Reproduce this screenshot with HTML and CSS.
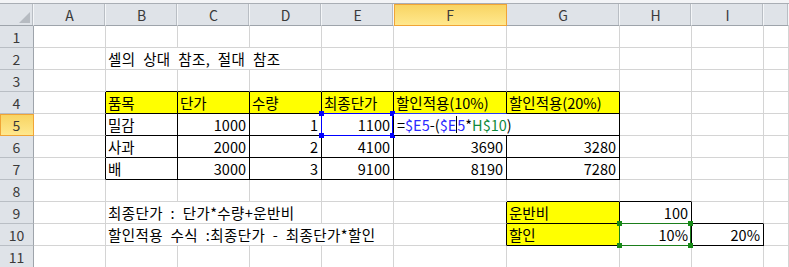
FILE: index.html
```html
<!DOCTYPE html>
<html>
<head>
    <meta charset="UTF-8">
    <title>셀의 상대 참조, 절대 참조</title>
    <link rel="stylesheet" href="styles.css">
</head>
<body>
    <div class="top-strip"></div>
    <div class="sheet">
        <!-- column headers -->
        <div class="ch corner"><span class="tri"></span></div>
        <div class="ch">A</div>
        <div class="ch">B</div>
        <div class="ch">C</div>
        <div class="ch">D</div>
        <div class="ch">E</div>
        <div class="ch sel">F</div>
        <div class="ch">G</div>
        <div class="ch">H</div>
        <div class="ch">I</div>
        <div class="ch"></div>

        <!-- row 1 -->
        <div class="rh">1</div>
        <div class="c"></div><div class="c"></div><div class="c"></div><div class="c"></div><div class="c"></div>
        <div class="c"></div><div class="c"></div><div class="c"></div><div class="c"></div><div class="c"></div>

        <!-- row 2 -->
        <div class="rh">2</div>
        <div class="c"></div>
        <div class="c span3 ko"><span>셀의 상대 참조, 절대 참조</span></div>
        <div class="c"></div><div class="c"></div><div class="c"></div><div class="c"></div><div class="c"></div><div class="c"></div>

        <!-- row 3 -->
        <div class="rh">3</div>
        <div class="c"></div>
        <div class="c bb"></div><div class="c bb"></div><div class="c bb"></div><div class="c bb"></div><div class="c bb"></div><div class="c bb"></div>
        <div class="c"></div><div class="c"></div><div class="c"></div>

        <!-- row 4 -->
        <div class="rh">4</div>
        <div class="c br"></div>
        <div class="c bk yel">품목</div>
        <div class="c bk yel">단가</div>
        <div class="c bk yel">수량</div>
        <div class="c bk yel">최종단가</div>
        <div class="c bk yel blue-under">할인적용(10%)</div>
        <div class="c bk yel">할인적용(20%)</div>
        <div class="c"></div><div class="c"></div><div class="c"></div>

        <!-- row 5 -->
        <div class="rh sel">5</div>
        <div class="c br"></div>
        <div class="c bk">밀감</div>
        <div class="c bk num">1000</div>
        <div class="c bk num">1</div>
        <div class="c bk num ref">1100
            <span class="ref-box blue"><i class="h tl"></i><i class="h tr"></i><i class="h bl"></i><i class="h br2"></i></span>
        </div>
        <div class="c bk ref">
            <span class="edit">=<b class="r1">$E5</b>-(<b class="r1">$E</b><span class="caret"></span><b class="r1">5</b>*<b class="r2">H$10</b>)</span>
        </div>
        <div class="c bk"></div>
        <div class="c"></div><div class="c"></div><div class="c"></div>

        <!-- row 6 -->
        <div class="rh">6</div>
        <div class="c br"></div>
        <div class="c bk">사과</div>
        <div class="c bk num">2000</div>
        <div class="c bk num">2</div>
        <div class="c bk num">4100</div>
        <div class="c bk num">3690</div>
        <div class="c bk num">3280</div>
        <div class="c"></div><div class="c"></div><div class="c"></div>

        <!-- row 7 -->
        <div class="rh">7</div>
        <div class="c br"></div>
        <div class="c bk">배</div>
        <div class="c bk num">3000</div>
        <div class="c bk num">3</div>
        <div class="c bk num">9100</div>
        <div class="c bk num">8190</div>
        <div class="c bk num">7280</div>
        <div class="c"></div><div class="c"></div><div class="c"></div>

        <!-- row 8 -->
        <div class="rh">8</div>
        <div class="c"></div><div class="c"></div><div class="c"></div><div class="c"></div><div class="c"></div><div class="c"></div>
        <div class="c bb"></div><div class="c bb"></div>
        <div class="c"></div><div class="c"></div>

        <!-- row 9 -->
        <div class="rh">9</div>
        <div class="c"></div>
        <div class="c span3 ko"><span>최종단가 : 단가*수량+운반비</span></div>
        <div class="c"></div>
        <div class="c br"></div>
        <div class="c bk yel">운반비</div>
        <div class="c bk num">100</div>
        <div class="c bb"></div>
        <div class="c"></div>

        <!-- row 10 -->
        <div class="rh">10</div>
        <div class="c"></div>
        <div class="c span4 ko"><span>할인적용 수식 :최종단가 - 최종단가*할인</span></div>
        <div class="c br"></div>
        <div class="c bk yel">할인</div>
        <div class="c bk num ref">10%
            <span class="ref-box green"><i class="h tl"></i><i class="h tr"></i><i class="h bl"></i><i class="h br2"></i></span>
        </div>
        <div class="c bk num">20%</div>
        <div class="c"></div>

        <!-- row 11 -->
        <div class="rh">11</div>
        <div class="c"></div><div class="c"></div><div class="c"></div><div class="c"></div><div class="c"></div>
        <div class="c"></div><div class="c"></div><div class="c"></div><div class="c"></div><div class="c"></div>
    </div>
</body>
</html>
```

FILE: styles.css
```css
body {
    margin: 0;
    background: #fff;
    font-family: "Noto Sans CJK KR", sans-serif;
    font-size: 14.5px;
    color: #000;
    overflow: hidden;
}
.top-strip {
    height: 3px;
    background: #f3f4f6;
    border-bottom: 1px solid #a9aeb4;
}
.sheet {
    display: grid;
    grid-template-columns: 34px repeat(5, 72px) 113px 113px 72px 72px 1fr;
    grid-auto-rows: 22px;
}
.ch, .rh {
    background: #dfe3e8;
    color: #3a3a3a;
    display: flex;
    align-items: center;
    justify-content: center;
    font-size: 14px;
    box-sizing: border-box;
}
.ch {
    border-right: 1px solid #f4f6f8;
    border-bottom: 1px solid #9ea4ab;
    box-shadow: inset -1px 0 0 #b9bec4;
}
.rh {
    border-right: 1px solid #9ea4ab;
    border-bottom: 1px solid #b9bec4;
}
.ch.sel, .rh.sel {
    background: linear-gradient(#f8d463, #ffe88e);
    border: 1px solid #f0a436;
    border-left: none;
    box-shadow: inset 1px 0 0 #f0a436;
}
.corner {
    justify-content: flex-end;
    align-items: flex-end;
    padding: 0 3px 2px 0;
}
.tri {
    width: 0;
    height: 0;
    border-left: 11px solid transparent;
    border-bottom: 11px solid #b6bbc1;
}
.c {
    box-sizing: border-box;
    border-right: 1px solid #d4d4d4;
    border-bottom: 1px solid #d4d4d4;
    display: flex;
    align-items: center;
    padding: 0 3px 0 2px;
    white-space: nowrap;
    min-width: 0;
}
.span3 {
    grid-column: span 3;
}
.span4 {
    grid-column: span 4;
}
.ko {
    word-spacing: 4px;
    letter-spacing: 0.4px;
}
.c.num {
    justify-content: flex-end;
}
.c.bk {
    border-right-color: #000;
    border-bottom-color: #000;
}
.c.br {
    border-right-color: #000;
}
.c.bb {
    border-bottom-color: #000;
}
.c.yel {
    background: #ffff00;
}
.c.blue-under {
    border-bottom-color: #2a3cf0;
}
.ref {
    position: relative;
    overflow: visible;
}
.ref-box {
    position: absolute;
    left: -1px;
    top: -1px;
    width: calc(100% + 1px);
    height: 23px;
    box-sizing: border-box;
    border: 1px solid;
}
.ref-box.blue {
    border-color: #0000ff;
    color: #0000ff;
}
.ref-box.green {
    border-color: #1b7d1b;
    color: #178a17;
}
.h {
    position: absolute;
    width: 5px;
    height: 5px;
    background: currentColor;
}
.h.tl { left: -3px; top: -3px; }
.h.tr { right: -3px; top: -3px; }
.h.bl { left: -3px; bottom: -3px; }
.h.br2 { right: -3px; bottom: -3px; }
.edit {
    position: absolute;
    left: 0;
    top: 0;
    width: 120px;
    height: 21px;
    background: #fff;
    display: flex;
    align-items: center;
    padding-left: 3px;
    box-sizing: border-box;
    z-index: 2;
}
.edit b {
    font-weight: normal;
}
.edit .r1 {
    color: #2b2bff;
}
.edit .r2 {
    color: #0f8a3c;
}
.caret {
    display: inline-block;
    width: 1px;
    height: 17px;
    background: #000;
}
```
